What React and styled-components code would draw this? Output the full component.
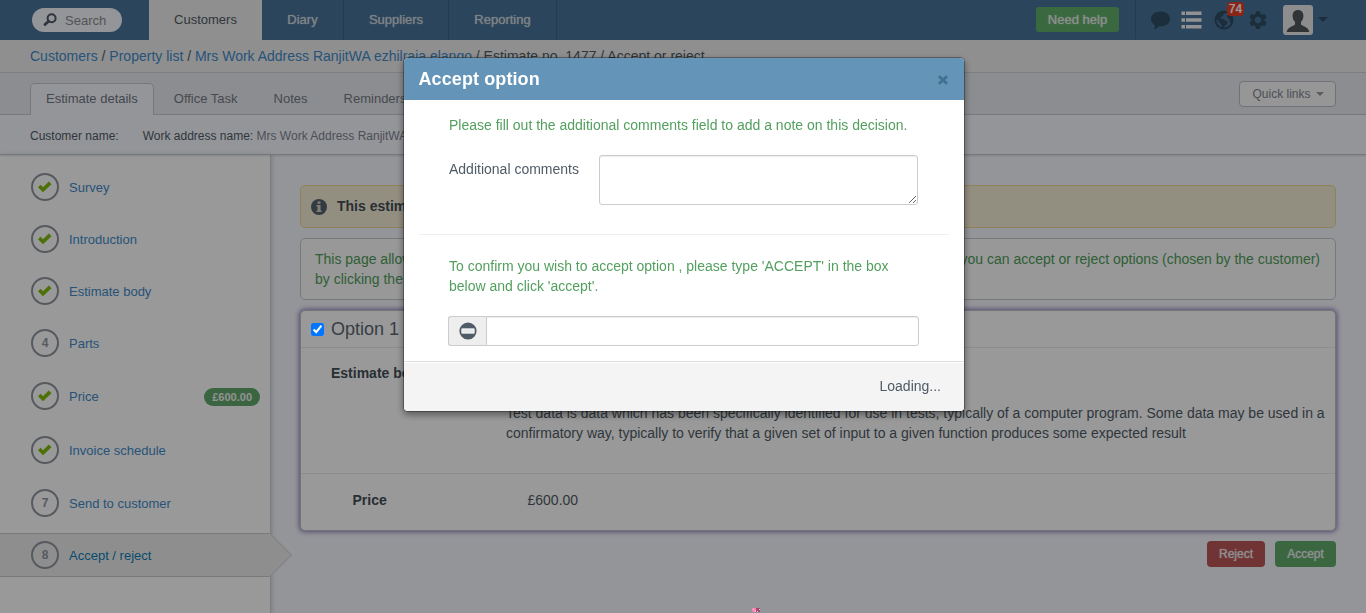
import React from "react";
import styled, { createGlobalStyle, css } from "styled-components";
import { MdSettings } from "react-icons/md";

const GlobalStyle = createGlobalStyle`
  * { box-sizing: border-box; }
  html, body { margin: 0; height: 613px; overflow: hidden; }
  body {
    background: #f7f8ff;
    color: #4f5b66;
    font: 14px/20px "Liberation Sans", Arial, sans-serif;
  }
  a { color: #428bca; text-decoration: none; }
  p { margin: 0; }
`;

const Page = styled.div`
  height: 613px;
  display: flex;
  flex-direction: column;
  overflow: hidden;
`;

/* ---------- top bar ---------- */
const TopBar = styled.header`
  height: 40px;
  flex: none;
  display: flex;
  background: #487599;
`;
const SearchBox = styled.div`
  width: 90px;
  height: 24px;
  margin: 8px 27px 0 32px;
  padding-left: 11px;
  border-radius: 12px;
  background: #f7f8ff;
  color: #8a8c90;
  font-size: 13px;
  line-height: 24px;
  display: flex;
  align-items: center;
  gap: 8px;
  span { padding-top: 1px; }
`;
const NavTab = styled.a`
  width: ${(p) => p.$w}px;
  font-size: 13px;
  line-height: 39px;
  text-align: center;
  ${(p) =>
    p.$active
      ? css`
          background: #efefef;
          color: #4f5b66;
        `
      : css`
          color: #d3dae0;
          border-right: 1px solid #3c6485;
          text-shadow: 0 0 1px rgba(211, 218, 224, 0.9);
        `}
`;
const TopTools = styled.div`
  margin-left: auto;
  display: flex;
  align-items: flex-start;
`;
const HelpButton = styled.a`
  width: 83px;
  height: 25px;
  margin: 7px 16px 0 0;
  border-radius: 3px;
  background: #61b06c;
  color: #e8ece9;
  font-size: 13px;
  line-height: 25px;
  text-align: center;
  text-shadow: 0 0 1px #e8ece9;
`;
const IconGroup = styled.div`
  width: 231px;
  height: 39px;
  border-left: 1px solid #3c6485;
  display: flex;
  align-items: center;
  padding-left: 15px;
  color: #2f4c63;
  svg { display: block; }
`;
const IconSlot = styled.span`
  position: relative;
  width: ${(p) => p.$w}px;
  height: 20px;
  margin-right: ${(p) => p.$gap}px;
  flex: none;
`;
const CountBadge = styled.span`
  position: absolute;
  left: 13px;
  top: -8px;
  width: 17px;
  height: 14px;
  border-radius: 4px;
  background: #e73c26;
  color: #fff;
  font-size: 12px;
  line-height: 14px;
  text-align: center;
  text-shadow: 0 0 1px #fff;
`;
const Avatar = styled.span`
  width: 30px;
  height: 30px;
  border-radius: 3px;
  background: #ececec;
  margin: 1px 5px 0 0;
  overflow: hidden;
`;
const Caret = styled.span`
  display: inline-block;
  border: ${(p) => p.$size}px solid transparent;
  border-top-color: ${(p) => p.$color};
  border-bottom: 0;
`;

/* ---------- sub headers ---------- */
const Breadcrumb = styled.nav`
  height: 33px;
  flex: none;
  padding-left: 30px;
  line-height: 32px;
  background: #efefef;
  border-bottom: 1px solid #cdd1d6;
`;
const TabStrip = styled.div`
  height: 42px;
  flex: none;
  display: flex;
  padding: 10px 30px 0;
  background: #e9ebf2;
  border-bottom: 1px solid #c8cacf;
`;
const Tab = styled.a`
  height: 32px;
  padding: 0 15px;
  border: 1px solid transparent;
  border-bottom: 0;
  border-radius: 5px 5px 0 0;
  margin-right: ${(p) => p.$gap}px;
  color: #767b85;
  font-size: 13px;
  line-height: 30px;
  ${(p) =>
    p.$active &&
    css`
      background: #f7f8ff;
      border-color: #c8cacf;
      color: #717882;
    `}
`;
const QuickLinks = styled.button`
  width: 97px;
  height: 26px;
  margin: -2px 0 0 auto;
  padding: 0 0 0 1px;
  border: 1px solid #babfc9;
  border-radius: 4px;
  background: #fbfbfc;
  color: #7d858e;
  font: 12px "Liberation Sans", Arial, sans-serif;
  display: flex;
  align-items: center;
  justify-content: center;
  gap: 5px;
`;
const InfoRow = styled.div`
  height: 40px;
  flex: none;
  display: flex;
  gap: 24px;
  padding-left: 30px;
  font-size: 12px;
  line-height: 42px;
  border-bottom: 1px solid #c4c9ce;
  box-shadow: 0 1px 2px rgba(0, 0, 0, 0.12);
  z-index: 1;
  span { color: #7f8592; }
`;

/* ---------- sidebar ---------- */
const Body = styled.div`
  flex: 1;
  display: flex;
  min-height: 0;
`;
const Sidebar = styled.aside`
  width: 271px;
  flex: none;
  padding-top: 6px;
  background: #fff;
  border-right: 1px solid #cdd2d8;
  box-shadow: 1px 0 4px rgba(80, 90, 110, 0.25);
`;
const Step = styled.div`
  height: ${(p) => p.$h}px;
  display: flex;
  align-items: center;
`;
const StepInner = styled.div`
  position: relative;
  flex: 1;
  height: 44px;
  display: flex;
  align-items: center;
  padding: 0 10px 0 31px;
  border: solid transparent;
  border-width: 1px 0;
  font-size: 13px;
  a { padding-top: 2px; }
  ${(p) =>
    p.$active &&
    css`
      background: #ededed;
      border-color: #cbcbcb;
      a { color: #0d7db5; }
    `}
`;
const StepMark = styled.span`
  width: 28px;
  height: 28px;
  margin-right: 10px;
  border: 2px solid #8f969f;
  border-radius: 50%;
  color: #8f969f;
  font-size: 12px;
  font-weight: bold;
  line-height: 1;
  display: flex;
  align-items: center;
  justify-content: center;
`;
const PricePill = styled.span`
  height: 18px;
  margin: 2px 0 0 auto;
  padding: 0 8px;
  border-radius: 9px;
  background: #61a96c;
  color: #f4f4f4;
  font-size: 11px;
  font-weight: bold;
  line-height: 18px;
`;
const StepArrow = styled.svg`
  position: absolute;
  left: 269px;
  top: -1px;
`;

/* ---------- main ---------- */
const Main = styled.main`
  flex: 1;
  padding: 30px 30px 0 29px;
  display: flex;
  flex-direction: column;
  gap: 10px;
`;
const Notice = styled.div`
  height: 43px;
  flex: none;
  padding: 0 0 1px 10px;
  display: flex;
  align-items: center;
  gap: 10px;
  border: 1px solid #efd896;
  border-radius: 5px;
  background: #f6eed6;
  font-weight: bold;
  color: #444e58;
  svg { margin-top: 1px; }
`;
const HelpText = styled.div`
  height: 62px;
  flex: none;
  padding: 10px 15px 0 14px;
  border: 1px solid #c6cacc;
  border-radius: 5px;
  background: #fdfdfd;
  color: #4f9f5b;
`;
const HelpLine = styled.div`
  display: flex;
  justify-content: space-between;
`;
const OptionCard = styled.section`
  height: 221px;
  flex: none;
  border: 1px solid #c0c0c8;
  border-radius: 5px;
  background: #fff;
  box-shadow: 0 0 5px 1px #8a7cba;
`;
const OptionHead = styled.div`
  height: 37px;
  padding-left: 10px;
  display: flex;
  align-items: center;
  gap: 7px;
  border-bottom: 1px solid #ebebeb;
  font-size: 18px;
  color: #5d6872;
`;
const Check = styled.input`
  position: relative;
  z-index: 6;
  width: 13px;
  height: 13px;
  margin: 1px 0 0;
`;
const OptionRow = styled.div`
  height: ${(p) => p.$h}px;
  display: flex;
  padding: ${(p) => p.$pad};
  border-bottom: ${(p) => (p.$line ? "1px solid #ebebeb" : 0)};
  strong {
    width: ${(p) => p.$label}px;
    flex: none;
    color: #444e58;
  }
`;
const Description = styled.p`
  padding-top: 40px;
  white-space: nowrap;
`;
const Actions = styled.div`
  display: flex;
  justify-content: flex-end;
  gap: 10px;
`;
const ActionButton = styled.a`
  width: ${(p) => p.$w}px;
  height: 26px;
  border-radius: 4px;
  background: ${(p) => (p.$danger ? "#bd5858" : "#61ac6c")};
  color: #ececec;
  font-size: 12px;
  line-height: 26px;
  text-align: center;
  text-shadow: 0 0 1px #ececec;
`;

/* ---------- dialog ---------- */
const Backdrop = styled.div`
  position: fixed;
  inset: 0;
  z-index: 5;
  background: rgba(0, 0, 0, 0.4);
`;
const Dialog = styled.section`
  position: fixed;
  left: 403px;
  top: 57px;
  z-index: 10;
  width: 562px;
  border: 1px solid rgba(0, 0, 0, 0.3);
  border-radius: 5px;
  background: #fff;
  background-clip: padding-box;
  box-shadow: 0 3px 7px rgba(0, 0, 0, 0.4);
`;
const DialogHead = styled.div`
  height: 42px;
  padding: 0 16px 0 14.5px;
  display: flex;
  align-items: center;
  justify-content: space-between;
  border-radius: 4px 4px 0 0;
  background: #6494b7;
  color: #fff;
  svg { margin-top: 2px; }
`;
const DialogTitle = styled.h3`
  margin: 0;
  font-size: 18px;
  line-height: 40px;
  font-weight: bold;
  letter-spacing: 0.1px;
`;
const DialogBody = styled.div`
  height: 261px;
  padding: 15px 15px 0;
`;
const GreenText = styled.p`
  padding-left: 30px;
  width: 490px;
  color: #529f5e;
`;
const CommentRow = styled.label`
  display: flex;
  height: 80px;
  margin-top: 20px;
  padding-left: 30px;
  border-bottom: 1px solid #eee;
  margin-bottom: 21px;
  span { width: 150px; padding-top: 4px; }
`;
const fieldStyle = css`
  border: 1px solid #ccc;
  box-shadow: inset 0 1px 1px rgba(0, 0, 0, 0.075);
  background: #fff;
  outline: 0;
`;
const CommentArea = styled.textarea`
  ${fieldStyle}
  width: 319px;
  height: 50px;
  border-radius: 3px;
`;
const InputGroup = styled.div`
  display: flex;
  height: 30px;
  margin: 20px 30px 0 29px;
`;
const AddOn = styled.span`
  width: 38px;
  border: 1px solid #ccc;
  border-right: 0;
  border-radius: 3px 0 0 3px;
  background: #eee;
  display: flex;
  align-items: center;
  justify-content: center;
`;
const ConfirmInput = styled.input`
  ${fieldStyle}
  flex: 1;
  min-width: 0;
  border-radius: 0 3px 3px 0;
`;
const DialogFoot = styled.div`
  height: 50px;
  padding-right: 23px;
  border-top: 1px solid #ddd;
  border-radius: 0 0 4px 4px;
  background: #f4f4f4;
  box-shadow: inset 0 1px 0 #fff;
  line-height: 49px;
  text-align: right;
`;
const Speck = styled.svg`
  position: fixed;
  left: 752px;
  top: 608px;
  z-index: 6;
`;

const steps = [
  { label: "Survey", done: true },
  { label: "Introduction", done: true },
  { label: "Estimate body", done: true },
  { label: "Parts" },
  { label: "Price", done: true, price: "£600.00", h: 54 },
  { label: "Invoice schedule", done: true, h: 54 },
  { label: "Send to customer" },
  { label: "Accept / reject", active: true },
];

const Tick = () => (
  <svg width="14" height="12" viewBox="0 0 14 12">
    <path d="M0 6.200 2.600 3.800 5 6.200 10.800.6l2.700 2.600L5 11.300z" fill="#7fbd0d" />
  </svg>
);

export default function App() {
  return (
    <Page>
      <GlobalStyle />
      <TopBar>
        <SearchBox>
          <svg width="14" height="14" viewBox="0 0 14 14" fill="none" stroke="#4f5768">
            <circle cx="8.6" cy="5.2" r="4" strokeWidth="2" />
            <path d="M5.600 8.200 2 11.600" strokeWidth="2.800" strokeLinecap="round" />
          </svg>
          <span>Search</span>
        </SearchBox>
        <NavTab $w={113} $active>Customers</NavTab>
        <NavTab $w={82}>Diary</NavTab>
        <NavTab $w={105}>Suppliers</NavTab>
        <NavTab $w={108}>Reporting</NavTab>
        <TopTools>
          <HelpButton>Need help</HelpButton>
          <IconGroup>
            <IconSlot $w={19} $gap={11}>
              <svg width="19" height="20" viewBox="0 0 19 20" fill="currentColor">
                <path d="M9.500 1.500c5.200 0 9.500 3.200 9.500 7.400s-4.300 7.400-9.500 7.400c-.6 0-1.200 0-1.700-.1C6.600 17.600 5 19 2.800 19.300c.8-1.300 1.200-2.700 1-4.200C1.500 13.800 0 11.600 0 8.900c0-4.200 4.300-7.400 9.500-7.400z" />
              </svg>
            </IconSlot>
            <IconSlot $w={21} $gap={12}>
              <svg width="21" height="20" viewBox="0 0 21 20" fill="#f4f4f4">
                <path d="M.500 1.500h3.500v3.500h-3.500zM5 1.500h15.500v3.500h-15.500zM.500 8.300h3.500v3.400h-3.500zM5 8.300h15.500v3.400h-15.500zM.500 15h3.500v3.500h-3.500zM5 15h15.500v3.500h-15.500z" />
              </svg>
            </IconSlot>
            <IconSlot $w={20} $gap={13}>
              <svg width="20" height="20" viewBox="0 0 20 20">
                <circle cx="10" cy="10" r="8.500" fill="none" stroke="#2f4c63" strokeWidth="2" />
                <path
                  fill="#2f4c63"
                  d="M1.500 8.500c1-4 4-7 8-7.500l3 .5-1 2-2 .5-.5 2-2 .8-.3 1.700 2.500.5 3 1.500 1.500 2-1.500 2.500-2 1.500-.5 2-1 .5-1-3.500-1.500-2-2-2.500zM14 4.500l3 1.500 1.500 4-1 3.500-1.500-1-.5-3-2-1.500-.5-2z"
                />
              </svg>
              <CountBadge>74</CountBadge>
            </IconSlot>
            <IconSlot $w={22} $gap={14}>
              <MdSettings size={22} viewBox="0 1 24 24" />
            </IconSlot>
            <Avatar>
              <svg width="30" height="30" viewBox="0 0 30 30">
                <path
                  fill="#50585b"
                  d="M15 5c3.500 0 5.400 2.300 5.400 5.800 0 2.700-1 4.900-2.400 6.200v2.500c1 1.500 7.500 2.200 8.300 7.500H3.700c.8-5.300 7.300-6 8.300-7.500V17c-1.400-1.300-2.400-3.500-2.400-6.200C9.600 7.300 11.500 5 15 5z"
                />
              </svg>
            </Avatar>
            <Caret $size={5} $color="#2f4c63" />
          </IconGroup>
        </TopTools>
      </TopBar>
      <Breadcrumb>
        <a>Customers</a> / <a>Property list</a> / <a>Mrs Work Address RanjitWA ezhilraja elango</a> / Estimate no. 1477 / Accept or reject
      </Breadcrumb>
      <TabStrip>
        <Tab $active $gap={4}>Estimate details</Tab>
        <Tab $gap={4}>Office Task</Tab>
        <Tab $gap={4}>Notes</Tab>
        <Tab $gap={0}>Reminders</Tab>
        <QuickLinks>
          Quick links <Caret $size={4} $color="#9299a1" />
        </QuickLinks>
      </TabStrip>
      <InfoRow>
        <div>Customer name:</div>
        <div>
          Work address name: <span>Mrs Work Address RanjitWA</span>
        </div>
      </InfoRow>
      <Body>
        <Sidebar>
          {steps.map((s, i) => (
            <Step key={s.label} $h={s.h || 52}>
              <StepInner $active={s.active}>
                <StepMark>{s.done ? <Tick /> : i + 1}</StepMark>
                <a>{s.label}</a>
                {s.price && <PricePill>{s.price}</PricePill>}
                {s.active && (
                  <StepArrow width="24" height="44" viewBox="0 0 24 44">
                    <path d="M0 .5h1.500L22.500 22 1.500 43.500H0z" fill="#ededed" />
                    <path d="M1 .5 22.500 22 1 43.500" fill="none" stroke="#cbcbcb" />
                  </StepArrow>
                )}
              </StepInner>
            </Step>
          ))}
        </Sidebar>
        <Main>
          <Notice>
            <svg width="16" height="16" viewBox="0 0 16 16">
              <circle cx="8" cy="8" r="8" fill="#56636f" />
              <path d="M6.500 2.500h3v2.300h-3zM5.500 6h4v5.500h1V13h-5v-1.500h1v-4h-1z" fill="#d8d3c0" />
            </svg>
            This estimate
          </Notice>
          <HelpText>
            <HelpLine>
              <span>This page allows</span>
              <span>you can accept or reject options (chosen by the customer)</span>
            </HelpLine>
            by clicking the
          </HelpText>
          <OptionCard>
            <OptionHead>
              <Check type="checkbox" defaultChecked />
              Option 1
            </OptionHead>
            <OptionRow $h={126} $pad="15px 0 0 30px" $label={175} $line>
              <strong>Estimate body</strong>
              <Description>
                Test data is data which has been specifically identified for use in tests, typically of a computer program. Some data may be used in a
                <br />
                confirmatory way, typically to verify that a given set of input to a given function produces some expected result
              </Description>
            </OptionRow>
            <OptionRow $h={56} $pad="16px 0 0 51.5px" $label={175}>
              <strong>Price</strong>
              <span>£600.00</span>
            </OptionRow>
          </OptionCard>
          <Actions>
            <ActionButton $w={58} $danger>Reject</ActionButton>
            <ActionButton $w={61}>Accept</ActionButton>
          </Actions>
        </Main>
      </Body>

      <Backdrop />
      <Speck width="8" height="4" viewBox="0 0 8 4">
        <path d="M0 0h4v4H0z" fill="#ff80b4" />
        <path d="M4 0h4v4H4z" fill="#a3476c" />
        <path d="M1 1h1v1H1zM3 2h1v2H3zM5 3h1v1H5zM7 1h1v1H7z" fill="#f3c9da" />
      </Speck>

      <Dialog>
        <DialogHead>
          <DialogTitle>Accept option</DialogTitle>
          <svg width="10" height="10" viewBox="0 0 10 10" stroke="#436f90" strokeWidth="2.800">
            <path d="M1 1.200 9 8.800M9 1.200 1 8.800" />
          </svg>
        </DialogHead>
        <DialogBody>
          <GreenText>Please fill out the additional comments field to add a note on this decision.</GreenText>
          <CommentRow>
            <span>Additional comments</span>
            <CommentArea />
          </CommentRow>
          <GreenText>
            To confirm you wish to accept option , please type 'ACCEPT' in the box below and click 'accept'.
          </GreenText>
          <InputGroup>
            <AddOn>
              <svg width="18" height="18" viewBox="0 0 18 18">
                <circle cx="9" cy="9" r="8.600" fill="#4f5b66" />
                <path d="M2.800 6.800h12.400v4.400H2.800z" fill="#e6e8ea" stroke="#fff" strokeWidth=".8" />
              </svg>
            </AddOn>
            <ConfirmInput />
          </InputGroup>
        </DialogBody>
        <DialogFoot>Loading...</DialogFoot>
      </Dialog>
    </Page>
  );
}
